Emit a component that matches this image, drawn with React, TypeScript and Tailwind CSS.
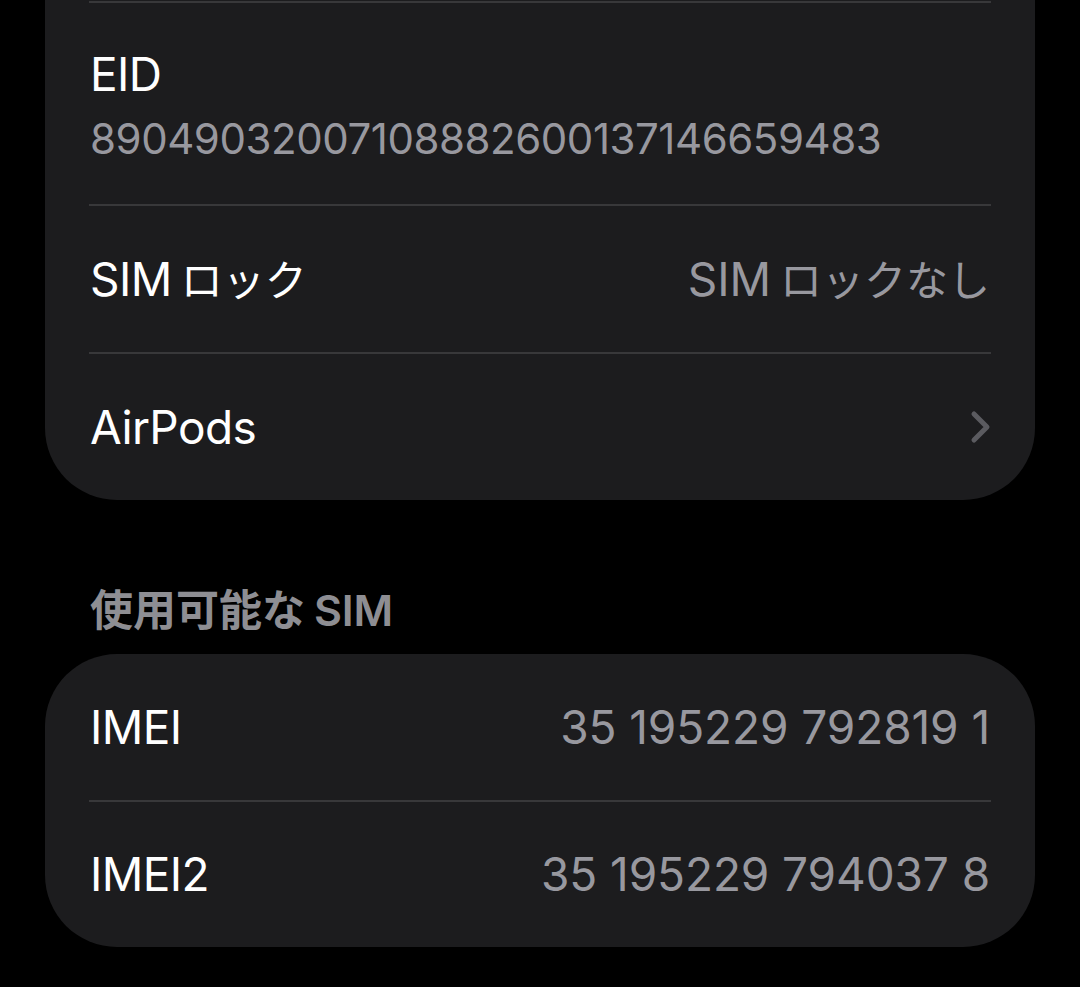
const font = { fontFamily: 'Inter, "Noto Sans CJK JP", sans-serif' };

// Japanese glyphs sit a bit smaller than the Latin ones, with a small gap after "SIM"
function Ja({ text }: { text: string }) {
  return <span className="ml-[9px] text-[42px] tracking-[0px]">{text}</span>;
}

function Row({
  label,
  value,
  chevron,
  divider,
  h,
}: {
  label: React.ReactNode;
  value?: React.ReactNode;
  chevron?: boolean;
  divider?: boolean;
  h: string;
}) {
  return (
    <div className={`flex flex-col ${h}`}>
      {divider && <div className="ml-[44px] mr-[44px] h-[2px] bg-[#38383a]" />}
      <div className="flex flex-1 items-center justify-between pl-[45px] pr-[45px]">
        <span className="text-[46px] tracking-[-0.6px] text-white">{label}</span>
        {value && <span className="text-[46px] tracking-[-0.1px] text-[#98989f]">{value}</span>}
        {chevron && (
          <svg width="22" height="34" viewBox="0 0 22 34" fill="none" className="mr-[-2px]">
            <path d="M4 4 L17 17 L4 30" stroke="#5b5b60" strokeWidth="5" strokeLinecap="round" strokeLinejoin="round" />
          </svg>
        )}
      </div>
    </div>
  );
}

export default function App() {
  return (
    <div className="min-h-[987px] w-[1080px] bg-black" style={font}>
      <div className="mx-[45px] rounded-b-[72px] bg-[#1c1c1e]">
        <div className="flex h-[204px] flex-col">
          <div className="ml-[44px] mr-[44px] mt-[1px] h-[2px] bg-[#38383a]" />
          <div className="flex flex-1 flex-col justify-center pl-[45px] pt-[6px]">
            <span className="text-[46px] leading-[58px] tracking-[-0.6px] text-white">EID</span>
            <span className="mt-[6px] text-[42px] leading-[60px] tracking-[-0.45px] text-[#98989f]">
              89049032007108882600137146659483
            </span>
          </div>
        </div>
        <Row
          label={<>SIM<Ja text="ロック" /></>}
          value={<>SIM<Ja text="ロックなし" /></>}
          divider
          h="h-[148px]"
        />
        <Row label="AirPods" chevron divider h="h-[148px]" />
      </div>

      <div className="flex items-center px-[90px] pb-[18px] pt-[84px]">
        <span className="text-[43px] font-semibold leading-[52px] text-[#8e8e93]">使用可能な</span>
        <span className="ml-[9px] text-[43px] font-semibold leading-[52px] tracking-[-0.2px] text-[#8e8e93]">SIM</span>
      </div>

      <div className="mx-[45px] rounded-[72px] bg-[#1c1c1e]">
        <Row label="IMEI" value="35 195229 792819 1" h="h-[146px]" />
        <Row label="IMEI2" value="35 195229 794037 8" divider h="h-[147px]" />
      </div>
    </div>
  );
}
